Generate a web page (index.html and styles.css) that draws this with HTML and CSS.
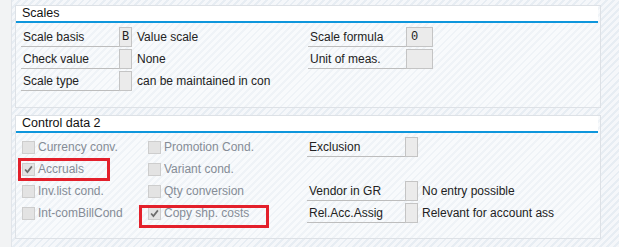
FILE: index.html
```html
<!DOCTYPE html>
<html>
<head>
    <meta charset="UTF-8">
    <link rel="stylesheet" href="styles.css">
</head>
<body>
<div class="screen">
    <div class="gutter"></div>
    <div class="main">
        <section class="group scales">
            <div class="group-title">Scales</div>
            <div class="group-body">
                <div class="field">
                    <span class="label">Scale basis</span>
                    <span class="input">B</span>
                    <span class="value">Value scale</span>
                </div>
                <div class="field">
                    <span class="label">Scale formula</span>
                    <span class="input wide">0</span>
                </div>
                <div class="field">
                    <span class="label">Check value</span>
                    <span class="input"></span>
                    <span class="value">None</span>
                </div>
                <div class="field">
                    <span class="label">Unit of meas.</span>
                    <span class="input wide"></span>
                </div>
                <div class="field">
                    <span class="label">Scale type</span>
                    <span class="input"></span>
                    <span class="value">can be maintained in con</span>
                </div>
            </div>
        </section>

        <section class="group control">
            <div class="group-title">Control data 2</div>
            <div class="group-body">
                <label class="check"><span class="box"></span>Currency conv.</label>
                <label class="check"><span class="box"></span>Promotion Cond.</label>
                <div class="field">
                    <span class="label">Exclusion</span>
                    <span class="input"></span>
                </div>

                <label class="check"><span class="box checked"><svg viewBox="0 0 13 13"><path d="M2.5 6.5 L5.2 9.6 L10.5 2.8"/></svg></span>Accruals</label>
                <label class="check"><span class="box"></span>Variant cond.</label>
                <div class="field"></div>

                <label class="check"><span class="box"></span>Inv.list cond.</label>
                <label class="check"><span class="box"></span>Qty conversion</label>
                <div class="field">
                    <span class="label">Vendor in GR</span>
                    <span class="input"></span>
                    <span class="value">No entry possible</span>
                </div>

                <label class="check"><span class="box"></span>Int-comBillCond</label>
                <label class="check"><span class="box checked"><svg viewBox="0 0 13 13"><path d="M2.5 6.5 L5.2 9.6 L10.5 2.8"/></svg></span>Copy shp. costs</label>
                <div class="field">
                    <span class="label">Rel.Acc.Assig</span>
                    <span class="input"></span>
                    <span class="value">Relevant for account ass</span>
                </div>
            </div>
            <div class="mark mark-accruals"></div>
            <div class="mark mark-copy"></div>
        </section>
    </div>
</div>
</body>
</html>
```

FILE: styles.css
```css
* {
    box-sizing: border-box;
    font-family: Tahoma, "Liberation Sans", Arial, sans-serif;
}

body {
    margin: 0;
    font-size: 12px;
    color: #222;
    background: repeating-linear-gradient(135deg, #f5f7fa 0, #f5f7fa 3px, #e7edf3 3px, #e7edf3 5px);
}

.screen {
    display: flex;
    height: 247px;
}

.gutter {
    width: 12px;
    background-color: #f2f3f4;
    border-right: 1px solid #e1e5ea;
}

.main {
    padding: 5px 0 0 3px;
}

.group {
    position: relative;
    width: 586px;
    border: 1px solid #dde1e6;
    background-color: rgba(255, 255, 255, 0.35);
}

.scales {
    height: 103px;
}

.control {
    height: 124px;
    margin-top: 7px;
}

.group-title {
    height: 17px;
    margin-right: 2px;
    padding-left: 6px;
    line-height: 15px;
    font-size: 12.5px;
    color: #111;
    background-color: white;
    border-bottom: 2px solid #0e96dc;
}

.group-body {
    display: grid;
    grid-auto-rows: 20px;
    row-gap: 2px;
    padding-top: 4px;
}

.scales .group-body {
    grid-template-columns: 287px auto;
    padding-left: 5px;
}

.control .group-body {
    grid-template-columns: 126px 160px auto;
    padding-left: 6px;
}

.field {
    display: flex;
    align-items: stretch;
}

.label {
    width: 98px;
    padding-left: 2px;
    line-height: 20px;
    border-bottom: 1px solid #bdbdbd;
    white-space: nowrap;
}

.control .label {
    margin-left: -1px;
}

.input {
    width: 13px;
    height: 20px;
    background-color: #ebebeb;
    border: 1px solid #c4c4c4;
    font-family: "Liberation Mono", monospace;
    font-size: 12px;
    line-height: 18px;
    text-align: center;
}

.input.wide {
    width: 27px;
    padding-left: 4px;
    text-align: left;
}

.value {
    padding-left: 5px;
    line-height: 20px;
    white-space: nowrap;
}

.control .value {
    padding-left: 4px;
}

.check {
    display: flex;
    align-items: center;
    gap: 3px;
    color: #858c96;
    white-space: nowrap;
}

.box {
    width: 13px;
    height: 13px;
    background-color: #e3e3e3;
    border: 1px solid #cdcdcd;
    display: flex;
}

.box svg {
    width: 11px;
    height: 11px;
}

.box path {
    fill: none;
    stroke: #6c6c6c;
    stroke-width: 2;
}

/* red annotation frames drawn over the screenshot */
.mark {
    position: absolute;
    border: 3px solid #e3202b;
    height: 23px;
}

.mark-accruals {
    left: 2px;
    top: 42px;
    width: 92px;
}

.mark-copy {
    left: 123px;
    top: 89px;
    width: 130px;
}
```
